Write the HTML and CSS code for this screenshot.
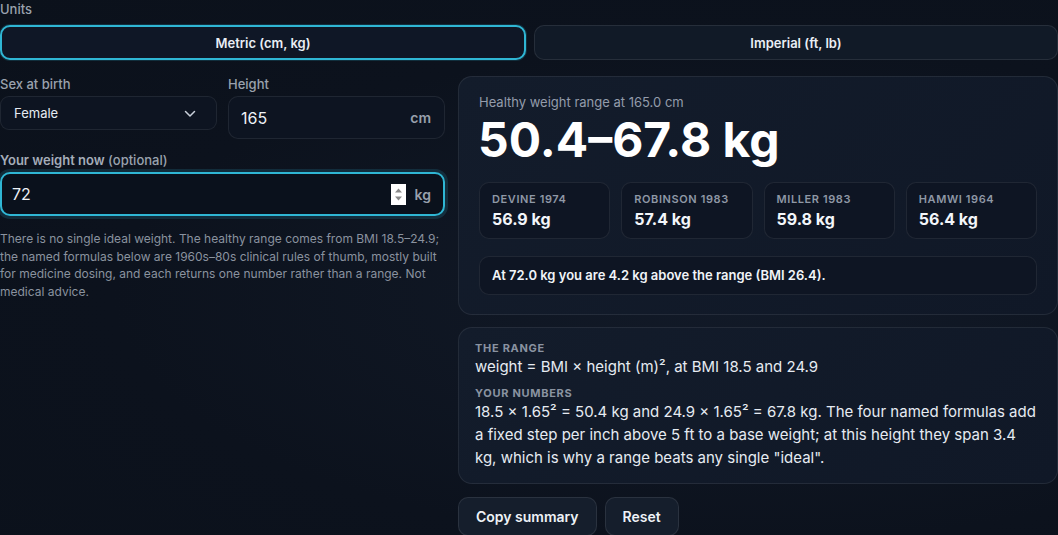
FILE: index.html
```html
<!DOCTYPE html>
<html lang="en">
<head>
<meta charset="utf-8">
<title>Healthy weight range</title>
<link rel="stylesheet" href="styles.css">
</head>
<body>
<div class="page">
  <div class="units">
    <div class="label">Units</div>
    <div class="seg">
      <button class="seg-btn active">Metric (cm, kg)</button>
      <button class="seg-btn">Imperial (ft, lb)</button>
    </div>
  </div>

  <div class="main">
    <div class="left">
      <div class="row2">
        <div class="field">
          <div class="label">Sex at birth</div>
          <div class="select">
            <span>Female</span>
            <svg class="chev" width="12" height="8" viewBox="0 0 12 8"><path d="M1.5 1.5 L6 6 L10.5 1.5" fill="none" stroke="#c9d0da" stroke-width="1.5" stroke-linecap="round" stroke-linejoin="round"/></svg>
          </div>
        </div>
        <div class="field">
          <div class="label">Height</div>
          <div class="input tall">
            <input type="text" value="165">
            <span class="unit">cm</span>
          </div>
        </div>
      </div>

      <div class="field weight">
        <div class="label"><span class="strong">Your weight now</span> (optional)</div>
        <div class="input tall focus">
          <input type="text" value="72">
          <span class="spin"><svg width="15" height="21" viewBox="0 0 15 21"><rect width="15" height="21" fill="#ffffff"/><path d="M4 8.5 L7.5 4.5 L11 8.5 Z" fill="#8a8a8a"/><path d="M4 12.5 L7.5 16.5 L11 12.5 Z" fill="#8a8a8a"/></svg></span>
          <span class="unit">kg</span>
        </div>
      </div>

      <p class="note">There is no single ideal weight. The healthy range comes from BMI 18.5–24.9; the named formulas below are 1960s–80s clinical rules of thumb, mostly built for medicine dosing, and each returns one number rather than a range. Not medical advice.</p>
    </div>

    <div class="right">
      <section class="card result">
        <div class="res-label">Healthy weight range at 165.0 cm</div>
        <div class="big">50.4–67.8 kg</div>
        <div class="tiles">
          <div class="tile"><div class="t-name">Devine 1974</div><div class="t-val">56.9 kg</div></div>
          <div class="tile"><div class="t-name">Robinson 1983</div><div class="t-val">57.4 kg</div></div>
          <div class="tile"><div class="t-name">Miller 1983</div><div class="t-val">59.8 kg</div></div>
          <div class="tile"><div class="t-name">Hamwi 1964</div><div class="t-val">56.4 kg</div></div>
        </div>
        <div class="status">At 72.0 kg you are 4.2 kg above the range (BMI 26.4).</div>
      </section>

      <section class="card explain">
        <div class="ex-label">The range</div>
        <div class="ex-text">weight = BMI × height (m)², at BMI 18.5 and 24.9</div>
        <div class="ex-label second">Your numbers</div>
        <div class="ex-text">18.5 × 1.65² = 50.4 kg and 24.9 × 1.65² = 67.8 kg. The four named formulas add a fixed step per inch above 5 ft to a base weight; at this height they span 3.4 kg, which is why a range beats any single "ideal".</div>
      </section>

      <div class="actions">
        <button class="btn">Copy summary</button>
        <button class="btn">Reset</button>
      </div>
    </div>
  </div>
</div>
</body>
</html>
```

FILE: styles.css
```css
* { box-sizing: border-box; }
html, body {
  margin: 0;
  padding: 0;
  height: 100%;
}
body {
  background: radial-gradient(ellipse at 70% 55%, #121a28 0%, #0c121d 60%, #0b111b 100%);
  background-color: #0c121d;
  color: #e8edf3;
  font-family: Inter, "Noto Sans", "Liberation Sans", sans-serif;
  overflow: hidden;
}
.page {
  width: 1058px;
  padding-top: 1px;
}
.label {
  font-size: 13px;
  line-height: 16px;
  color: #9aa2ae;
  font-weight: 500;
  margin-bottom: 4px;
}
.units .label { margin-bottom: 8px; }
.seg {
  display: flex;
  gap: 8px;
}
.seg-btn {
  flex: 1;
  height: 35px;
  border-radius: 10px;
  border: 1px solid rgba(255,255,255,0.09);
  background: #111a27;
  color: #e9eef5;
  font-family: inherit;
  font-size: 13px;
  font-weight: 600;
}
.seg-btn.active {
  border: 2px solid #2fb6d4;
  background: #0f1726;
  box-shadow: 0 0 0 1px rgba(47,182,212,0.18);
}
.main {
  display: grid;
  grid-template-columns: 445px minmax(0, 1fr);
  column-gap: 13px;
  margin-top: 16px;
  align-items: start;
}
.row2 {
  display: grid;
  grid-template-columns: minmax(0, 1fr) minmax(0, 1fr);
  column-gap: 11px;
  align-items: start;
}
.field { min-width: 0; }
.select {
  height: 34px;
  border-radius: 9px;
  border: 1px solid rgba(255,255,255,0.08);
  background: #0d1421;
  display: flex;
  align-items: center;
  justify-content: space-between;
  padding: 0 20px 0 13px;
  font-size: 13px;
  color: #e6ebf2;
}
.chev { margin-top: 1px; }
.input {
  display: flex;
  align-items: center;
  border-radius: 10px;
  border: 1px solid rgba(255,255,255,0.08);
  background: #0d1421;
  padding: 0 13px 0 12px;
}
.input.tall { height: 43px; }
.input input {
  flex: 1;
  width: 0;
  min-width: 0;
  border: 0;
  outline: 0;
  background: transparent;
  color: #eef2f7;
  font-family: inherit;
  font-size: 16px;
  padding: 0;
}
.input.focus {
  height: 44px;
  border: 2px solid #2fb6d4;
  background: #0a111c;
  box-shadow: 0 0 0 3px rgba(47,182,212,0.16);
  padding: 0 12px 0 10px;
}
.unit {
  font-size: 14px;
  font-weight: 600;
  color: #98a0ac;
}
.spin {
  display: flex;
  margin-right: 9px;
}
.weight { margin-top: 13px; }
.strong { font-weight: 600; color: #a5adb9; }
.note {
  margin: 14px 0 0;
  font-size: 12px;
  line-height: 17.5px;
  color: #8a929f;
}
.right {
  display: flex;
  flex-direction: column;
}
.card {
  border: 1px solid rgba(255,255,255,0.08);
  border-radius: 14px;
  background: linear-gradient(135deg, #131c2b 0%, #101827 100%);
}
.result { padding: 16px 20px 19px; }
.res-label {
  font-size: 13px;
  line-height: 18px;
  color: #949cab;
}
.big {
  font-size: 48px;
  line-height: 48px;
  font-weight: 700;
  color: #ffffff;
  margin-top: 5px;
  margin-left: -1px;
}
.tiles {
  display: grid;
  grid-template-columns: repeat(4, minmax(0, 1fr));
  gap: 11px;
  margin-top: 18px;
}
.tile {
  border: 1px solid rgba(255,255,255,0.08);
  border-radius: 10px;
  background: #0e1523;
  padding: 9px 12px 9px;
  height: 57px;
}
.t-name {
  font-size: 11px;
  line-height: 14px;
  font-weight: 600;
  letter-spacing: 0.6px;
  text-transform: uppercase;
  color: #8f98a6;
}
.t-val {
  font-size: 16px;
  line-height: 20px;
  font-weight: 700;
  color: #f3f6fa;
  margin-top: 3px;
}
.status {
  margin-top: 17px;
  border: 1px solid rgba(255,255,255,0.08);
  border-radius: 10px;
  background: #0e1523;
  padding: 10px 12px;
  font-size: 13px;
  line-height: 17px;
  font-weight: 600;
  color: #f1f4f8;
}
.explain {
  margin-top: 12px;
  padding: 13px 16px 14px;
}
.ex-label {
  font-size: 11px;
  line-height: 14px;
  font-weight: 700;
  letter-spacing: 0.7px;
  text-transform: uppercase;
  color: #8a93a1;
}
.ex-label.second { margin-top: 8px; }
.ex-text {
  font-size: 15px;
  line-height: 23px;
  color: #e6ebf2;
}
.actions {
  display: flex;
  gap: 8px;
  margin-top: 13px;
}
.btn {
  height: 39px;
  padding: 0 17px;
  border-radius: 10px;
  border: 1px solid rgba(255,255,255,0.09);
  background: #151e2c;
  color: #eef2f7;
  font-family: inherit;
  font-size: 14px;
  font-weight: 600;
}
```
